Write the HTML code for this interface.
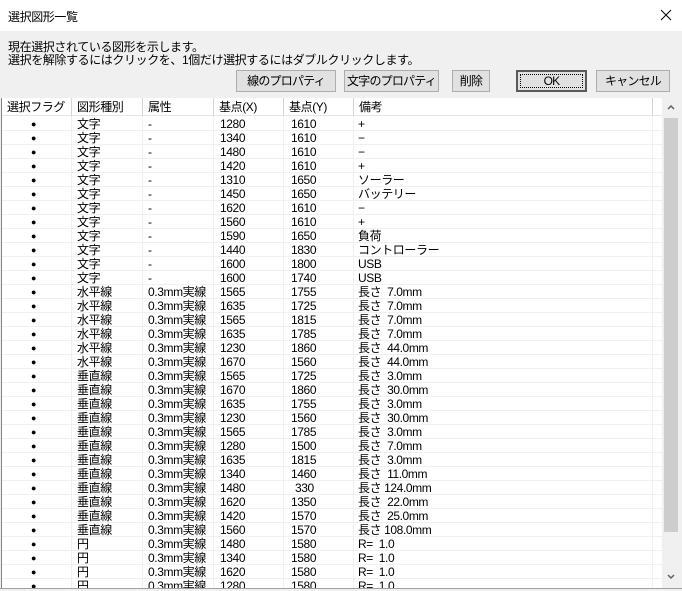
<!DOCTYPE html><html><head><meta charset="utf-8"><style>
*{margin:0;padding:0;box-sizing:border-box}
body{width:682px;height:591px;background:#f0f0f0;font:12px "Liberation Sans","Noto Sans CJK JP",sans-serif;color:#000;position:relative;overflow:hidden;letter-spacing:-0.4px}
.title{position:absolute;left:0;top:0;width:682px;height:31px;background:#fff}
.title span{position:absolute;left:8px;top:8px;font-size:12px}
.x{position:absolute;left:660px;top:9px}
.msg{position:absolute;left:8px;line-height:13px}
.btn{position:absolute;top:70px;height:22px;background:#e1e1e1;border:1px solid #adadad;text-align:center;line-height:20px;white-space:nowrap;letter-spacing:-0.8px}
.list{position:absolute;left:1px;top:98px;width:678px;height:490px;background:#fff;border-left:1px solid #828282;overflow:hidden}
.hdr{position:absolute;left:0;top:0;width:660px;height:18px;background:#fff;border-bottom:1px solid #e5e5e5}
.hdr div{position:absolute;top:0;height:18px;border-right:1px solid #d5d5d5;padding-left:5px;line-height:19px}
.row{position:absolute;left:0;width:660px;height:14px;border-bottom:1px solid #f0f0f0;white-space:pre;line-height:15px}
.row span{position:absolute;top:0}
.row span:first-child{font-size:9px;left:29px!important}
.vl{position:absolute;top:18px;width:1px;height:480px;background:#f0f0f0}
.sb{position:absolute;left:660px;top:0;width:18px;height:493px;background:#f0f0f0}
.th{position:absolute;left:2px;top:20px;width:14px;height:414px;background:#cdcdcd}
</style></head><body>
<div class="title"><span>選択図形一覧</span><svg class="x" width="12" height="12"><path d="M1 1L11 11M11 1L1 11" stroke="#000" stroke-width="1"/></svg></div>
<div class="msg" style="top:41px">現在選択されている図形を示します。</div>
<div class="msg" style="top:54px">選択を解除するにはクリックを、1個だけ選択するにはダブルクリックします。</div>
<div class="btn" style="left:236px;width:100px">線のプロパティ</div>
<div class="btn" style="left:344px;width:95px">文字のプロパティ</div>
<div class="btn" style="left:452px;width:38px">削除</div>
<div class="btn" style="left:516px;width:71px;border:2px solid #5a5a5a;line-height:18px"><div style="margin:2px;border:1px dotted #000;height:14px;line-height:12px">OK</div></div>
<div class="btn" style="left:596px;width:74px">キャンセル</div>
<div class="list">
<div class="hdr">
<div style="left:0;width:70px">選択フラグ</div><div style="left:70px;width:71px">図形種別</div><div style="left:141px;width:71px">属性</div><div style="left:212px;width:70px">基点(X)</div><div style="left:282px;width:70px">基点(Y)</div><div style="left:352px;width:299px">備考</div>
</div>
<div class="vl" style="left:69px"></div><div class="vl" style="left:140px"></div><div class="vl" style="left:211px"></div><div class="vl" style="left:281px"></div><div class="vl" style="left:351px"></div><div class="vl" style="left:650px"></div>
<div id="rows">
<div class="row" style="top:19px"><span style="left:28px">●</span><span style="left:75px">文字</span><span style="left:146px">-</span><span style="left:218px">1280</span><span style="left:289px">1610</span><span style="left:356px">+</span></div>
<div class="row" style="top:33px"><span style="left:28px">●</span><span style="left:75px">文字</span><span style="left:146px">-</span><span style="left:218px">1340</span><span style="left:289px">1610</span><span style="left:356px">−</span></div>
<div class="row" style="top:47px"><span style="left:28px">●</span><span style="left:75px">文字</span><span style="left:146px">-</span><span style="left:218px">1480</span><span style="left:289px">1610</span><span style="left:356px">−</span></div>
<div class="row" style="top:61px"><span style="left:28px">●</span><span style="left:75px">文字</span><span style="left:146px">-</span><span style="left:218px">1420</span><span style="left:289px">1610</span><span style="left:356px">+</span></div>
<div class="row" style="top:75px"><span style="left:28px">●</span><span style="left:75px">文字</span><span style="left:146px">-</span><span style="left:218px">1310</span><span style="left:289px">1650</span><span style="left:356px">ソーラー</span></div>
<div class="row" style="top:89px"><span style="left:28px">●</span><span style="left:75px">文字</span><span style="left:146px">-</span><span style="left:218px">1450</span><span style="left:289px">1650</span><span style="left:356px">バッテリー</span></div>
<div class="row" style="top:103px"><span style="left:28px">●</span><span style="left:75px">文字</span><span style="left:146px">-</span><span style="left:218px">1620</span><span style="left:289px">1610</span><span style="left:356px">−</span></div>
<div class="row" style="top:117px"><span style="left:28px">●</span><span style="left:75px">文字</span><span style="left:146px">-</span><span style="left:218px">1560</span><span style="left:289px">1610</span><span style="left:356px">+</span></div>
<div class="row" style="top:131px"><span style="left:28px">●</span><span style="left:75px">文字</span><span style="left:146px">-</span><span style="left:218px">1590</span><span style="left:289px">1650</span><span style="left:356px">負荷</span></div>
<div class="row" style="top:145px"><span style="left:28px">●</span><span style="left:75px">文字</span><span style="left:146px">-</span><span style="left:218px">1440</span><span style="left:289px">1830</span><span style="left:356px">コントローラー</span></div>
<div class="row" style="top:159px"><span style="left:28px">●</span><span style="left:75px">文字</span><span style="left:146px">-</span><span style="left:218px">1600</span><span style="left:289px">1800</span><span style="left:356px">USB</span></div>
<div class="row" style="top:173px"><span style="left:28px">●</span><span style="left:75px">文字</span><span style="left:146px">-</span><span style="left:218px">1600</span><span style="left:289px">1740</span><span style="left:356px">USB</span></div>
<div class="row" style="top:187px"><span style="left:28px">●</span><span style="left:75px">水平線</span><span style="left:146px">0.3mm実線</span><span style="left:218px">1565</span><span style="left:289px">1755</span><span style="left:356px">長さ  7.0mm</span></div>
<div class="row" style="top:201px"><span style="left:28px">●</span><span style="left:75px">水平線</span><span style="left:146px">0.3mm実線</span><span style="left:218px">1635</span><span style="left:289px">1725</span><span style="left:356px">長さ  7.0mm</span></div>
<div class="row" style="top:215px"><span style="left:28px">●</span><span style="left:75px">水平線</span><span style="left:146px">0.3mm実線</span><span style="left:218px">1565</span><span style="left:289px">1815</span><span style="left:356px">長さ  7.0mm</span></div>
<div class="row" style="top:229px"><span style="left:28px">●</span><span style="left:75px">水平線</span><span style="left:146px">0.3mm実線</span><span style="left:218px">1635</span><span style="left:289px">1785</span><span style="left:356px">長さ  7.0mm</span></div>
<div class="row" style="top:243px"><span style="left:28px">●</span><span style="left:75px">水平線</span><span style="left:146px">0.3mm実線</span><span style="left:218px">1230</span><span style="left:289px">1860</span><span style="left:356px">長さ  44.0mm</span></div>
<div class="row" style="top:257px"><span style="left:28px">●</span><span style="left:75px">水平線</span><span style="left:146px">0.3mm実線</span><span style="left:218px">1670</span><span style="left:289px">1560</span><span style="left:356px">長さ  44.0mm</span></div>
<div class="row" style="top:271px"><span style="left:28px">●</span><span style="left:75px">垂直線</span><span style="left:146px">0.3mm実線</span><span style="left:218px">1565</span><span style="left:289px">1725</span><span style="left:356px">長さ  3.0mm</span></div>
<div class="row" style="top:285px"><span style="left:28px">●</span><span style="left:75px">垂直線</span><span style="left:146px">0.3mm実線</span><span style="left:218px">1670</span><span style="left:289px">1860</span><span style="left:356px">長さ  30.0mm</span></div>
<div class="row" style="top:299px"><span style="left:28px">●</span><span style="left:75px">垂直線</span><span style="left:146px">0.3mm実線</span><span style="left:218px">1635</span><span style="left:289px">1755</span><span style="left:356px">長さ  3.0mm</span></div>
<div class="row" style="top:313px"><span style="left:28px">●</span><span style="left:75px">垂直線</span><span style="left:146px">0.3mm実線</span><span style="left:218px">1230</span><span style="left:289px">1560</span><span style="left:356px">長さ  30.0mm</span></div>
<div class="row" style="top:327px"><span style="left:28px">●</span><span style="left:75px">垂直線</span><span style="left:146px">0.3mm実線</span><span style="left:218px">1565</span><span style="left:289px">1785</span><span style="left:356px">長さ  3.0mm</span></div>
<div class="row" style="top:341px"><span style="left:28px">●</span><span style="left:75px">垂直線</span><span style="left:146px">0.3mm実線</span><span style="left:218px">1280</span><span style="left:289px">1500</span><span style="left:356px">長さ  7.0mm</span></div>
<div class="row" style="top:355px"><span style="left:28px">●</span><span style="left:75px">垂直線</span><span style="left:146px">0.3mm実線</span><span style="left:218px">1635</span><span style="left:289px">1815</span><span style="left:356px">長さ  3.0mm</span></div>
<div class="row" style="top:369px"><span style="left:28px">●</span><span style="left:75px">垂直線</span><span style="left:146px">0.3mm実線</span><span style="left:218px">1340</span><span style="left:289px">1460</span><span style="left:356px">長さ  11.0mm</span></div>
<div class="row" style="top:383px"><span style="left:28px">●</span><span style="left:75px">垂直線</span><span style="left:146px">0.3mm実線</span><span style="left:218px">1480</span><span style="left:293px">330</span><span style="left:356px">長さ 124.0mm</span></div>
<div class="row" style="top:397px"><span style="left:28px">●</span><span style="left:75px">垂直線</span><span style="left:146px">0.3mm実線</span><span style="left:218px">1620</span><span style="left:289px">1350</span><span style="left:356px">長さ  22.0mm</span></div>
<div class="row" style="top:411px"><span style="left:28px">●</span><span style="left:75px">垂直線</span><span style="left:146px">0.3mm実線</span><span style="left:218px">1420</span><span style="left:289px">1570</span><span style="left:356px">長さ  25.0mm</span></div>
<div class="row" style="top:425px"><span style="left:28px">●</span><span style="left:75px">垂直線</span><span style="left:146px">0.3mm実線</span><span style="left:218px">1560</span><span style="left:289px">1570</span><span style="left:356px">長さ 108.0mm</span></div>
<div class="row" style="top:439px"><span style="left:28px">●</span><span style="left:75px">円</span><span style="left:146px">0.3mm実線</span><span style="left:218px">1480</span><span style="left:289px">1580</span><span style="left:356px">R=  1.0</span></div>
<div class="row" style="top:453px"><span style="left:28px">●</span><span style="left:75px">円</span><span style="left:146px">0.3mm実線</span><span style="left:218px">1340</span><span style="left:289px">1580</span><span style="left:356px">R=  1.0</span></div>
<div class="row" style="top:467px"><span style="left:28px">●</span><span style="left:75px">円</span><span style="left:146px">0.3mm実線</span><span style="left:218px">1620</span><span style="left:289px">1580</span><span style="left:356px">R=  1.0</span></div>
<div class="row" style="top:481px"><span style="left:28px">●</span><span style="left:75px">円</span><span style="left:146px">0.3mm実線</span><span style="left:218px">1280</span><span style="left:289px">1580</span><span style="left:356px">R=  1.0</span></div>
</div>
<div class="sb"><svg style="position:absolute;left:5px;top:6px" width="8" height="6"><path d="M1 5L4 2L7 5" stroke="#606060" fill="none" stroke-width="1.5"/></svg><div class="th"></div><svg style="position:absolute;left:5px;top:476px" width="8" height="6"><path d="M1 1L4 4L7 1" stroke="#606060" fill="none" stroke-width="1.5"/></svg></div>
</div>
<div style="position:absolute;left:0;top:588px;width:682px;height:3px;background:#f0f0f0;border-top:1px solid #a0a0a0"></div>
</body></html>
